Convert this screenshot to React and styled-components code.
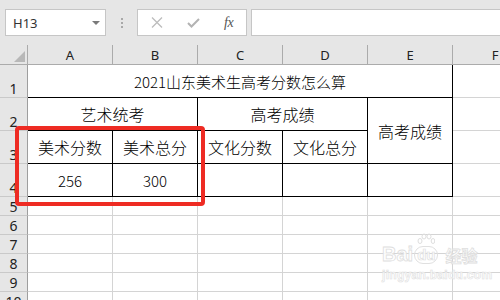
import React from "react";
import styled, { createGlobalStyle } from "styled-components";

const Global = createGlobalStyle`
  html, body { margin: 0; padding: 0; background: #fff; }
  body { font-family: "Noto Sans", "Noto Sans CJK SC", sans-serif; }
`;

const Page = styled.div`
  position: relative;
  width: 500px;
  height: 300px;
  overflow: hidden;
  background: #fff;
`;

const Toolbar = styled.div`
  display: flex;
  align-items: center;
  height: 45px;
  padding-left: 5px;
  background: #e6e6e6;
  box-sizing: border-box;
`;

const Box = styled.div`
  box-sizing: border-box;
  height: 27px;
  background: #fff;
  border: 1px solid #c6c6c6;
  display: flex;
  align-items: center;
`;

const NameBox = styled(Box)`
  width: 101px;
  justify-content: space-between;
  padding: 0 5px 0 7px;
  font-family: "Noto Sans", sans-serif;
  font-size: 13px;
  color: #333;
`;

const Caret = styled.span`
  width: 0;
  height: 0;
  border-left: 4px solid transparent;
  border-right: 4px solid transparent;
  border-top: 4px solid #7a7a7a;
`;

const Grip = styled.div`
  display: flex;
  flex-direction: column;
  gap: 2px;
  margin: 0 14px 0 15px;
  span {
    width: 2px;
    height: 2px;
    background: #a8a8a8;
  }
`;

const FxBox = styled(Box)`
  width: 110px;
  padding-left: 13px;
  gap: 24px;
`;

const Fx = styled.span`
  font-family: "Liberation Serif", serif;
  font-style: italic;
  font-size: 14px;
  color: #555;
  letter-spacing: -0.5px;
`;

const Formula = styled(Box)`
  flex: 1;
  margin-left: 4px;
  margin-right: -2px;
`;

const SheetWrap = styled.div`
  position: relative;
`;

const Sheet = styled.div`
  display: grid;
  grid-template-columns: 28px repeat(6, 85px);
  grid-template-rows: 20px repeat(4, 33px) repeat(6, 19px);
`;

const Corner = styled.div`
  box-sizing: border-box;
  background: #e6e6e6;
  border-right: 1px solid #ababab;
  border-bottom: 1px solid #ababab;
  position: relative;
  &::after {
    content: "";
    position: absolute;
    right: 2px;
    bottom: 2px;
    width: 0;
    height: 0;
    border-left: 11px solid transparent;
    border-bottom: 11px solid #b8b8b8;
  }
`;

const ColHead = styled.div`
  box-sizing: border-box;
  background: #e6e6e6;
  border-right: 1px solid #ababab;
  border-bottom: 1px solid #ababab;
  display: flex;
  align-items: flex-end;
  justify-content: center;
  font-family: "Noto Sans", sans-serif;
  font-size: 13px;
  line-height: 18px;
  color: #222;
`;

const RowHead = styled.div`
  box-sizing: border-box;
  background: #e6e6e6;
  border-right: 1px solid #9e9e9e;
  border-bottom: 1px solid #c9c9c9;
  display: flex;
  align-items: flex-end;
  justify-content: center;
  font-family: "Noto Sans", sans-serif;
  font-size: 14px;
  line-height: 17px;
  color: #222;
`;

const Cell = styled.div`
  box-sizing: border-box;
  border-right: 1px solid ${(p) => (p.$ruled ? "#000" : "#d4d4d4")};
  border-bottom: 1px solid ${(p) => (p.$ruled ? "#000" : "#d4d4d4")};
  grid-column: span ${(p) => p.$cols || 1};
  grid-row: span ${(p) => p.$rows || 1};
  display: flex;
  align-items: center;
  justify-content: center;
  font-family: "Noto Sans CJK SC", "Noto Sans", sans-serif;
  font-weight: 300;
  font-size: ${(p) => p.$size || 16}px;
  color: #000;
  white-space: nowrap;
  overflow: hidden;
`;

const Highlight = styled.div`
  position: absolute;
  left: 15px;
  top: 81px;
  width: 190px;
  height: 80px;
  box-sizing: border-box;
  border: 4px solid #ee2b23;
  border-radius: 4px;
  pointer-events: none;
`;

const Watermark = styled.div`
  position: absolute;
  left: 382px;
  top: 244px;
  display: flex;
  flex-direction: column;
  align-items: flex-start;
  color: rgba(255, 255, 255, 0.9);
  -webkit-text-stroke: 0.8px #dedede;
  font-family: "Liberation Sans", "Noto Sans CJK SC", sans-serif;
  font-weight: 700;
  pointer-events: none;
`;

const MarkRow = styled.div`
  display: flex;
  align-items: flex-end;
  font-size: 20px;
  line-height: 20px;
`;

const Du = styled.span`
  position: relative;
  font-size: 15px;
  line-height: 16px;
  margin: 0 1px;
  padding: 0 2px;
  border: 1px solid #e0e0e0;
  border-radius: 9px;
  -webkit-text-stroke: 0.7px #dedede;
`;

const Paw = styled.svg`
  position: absolute;
  left: 2px;
  top: -14px;
`;

const Jy = styled.span`
  font-family: "Noto Sans CJK SC", sans-serif;
  font-size: 16px;
  line-height: 18px;
  margin-left: 6px;
`;

const Url = styled.div`
  font-size: 12px;
  line-height: 14px;
  margin-top: 4px;
  letter-spacing: 0.3px;
  -webkit-text-stroke: 0.6px #e0e0e0;
`;

const cols = ["A", "B", "C", "D", "E", "F"];

export default function App() {
  return (
    <Page>
      <Global />
      <Toolbar>
        <NameBox>
          <span>H13</span>
          <Caret />
        </NameBox>
        <Grip>
          <span />
          <span />
          <span />
        </Grip>
        <FxBox>
          <svg width="12" height="11" viewBox="0 0 12 11">
            <path d="M1 0.5 L11 10.5 M11 0.5 L1 10.5" stroke="#bdbdbd" strokeWidth="1.3" fill="none" />
          </svg>
          <svg width="13" height="10" viewBox="0 0 13 10">
            <path d="M1 5 L4.5 8.5 L12 1" stroke="#b3b3b3" strokeWidth="2" fill="none" />
          </svg>
          <Fx>fx</Fx>
        </FxBox>
        <Formula />
      </Toolbar>
      <SheetWrap>
        <Sheet>
          <Corner />
          {cols.map((c) => (
            <ColHead key={c}>{c}</ColHead>
          ))}

          <RowHead>1</RowHead>
          <Cell $ruled $cols={5} $size={15}>2021山东美术生高考分数怎么算</Cell>
          <Cell />

          <RowHead>2</RowHead>
          <Cell $ruled $cols={2}>艺术统考</Cell>
          <Cell $ruled $cols={2}>高考成绩</Cell>
          <Cell $ruled $rows={2}>高考成绩</Cell>
          <Cell />

          <RowHead>3</RowHead>
          <Cell $ruled>美术分数</Cell>
          <Cell $ruled>美术总分</Cell>
          <Cell $ruled>文化分数</Cell>
          <Cell $ruled>文化总分</Cell>
          <Cell />

          <RowHead>4</RowHead>
          <Cell $ruled $size={15}>256</Cell>
          <Cell $ruled $size={15}>300</Cell>
          <Cell $ruled />
          <Cell $ruled />
          <Cell $ruled />
          <Cell />

          {[5, 6, 7, 8, 9, 10].map((r) => (
            <React.Fragment key={r}>
              <RowHead>{r}</RowHead>
              {cols.map((c) => (
                <Cell key={c} />
              ))}
            </React.Fragment>
          ))}
        </Sheet>
        <Highlight />
      </SheetWrap>
      <Watermark>
        <MarkRow>
          <span>Bai</span>
          <Du>
            <Paw width="18" height="13" viewBox="0 0 18 13">
              <g fill="none" stroke="#dedede" strokeWidth="1">
                <ellipse cx="3" cy="8" rx="2" ry="2.5" />
                <ellipse cx="7" cy="3.5" rx="2" ry="2.5" />
                <ellipse cx="12" cy="3.5" rx="2" ry="2.5" />
                <ellipse cx="16" cy="8" rx="1.8" ry="2.5" />
              </g>
            </Paw>
            du
          </Du>
          <Jy>经验</Jy>
        </MarkRow>
        <Url>jingyan.baidu.com</Url>
      </Watermark>
    </Page>
  );
}
